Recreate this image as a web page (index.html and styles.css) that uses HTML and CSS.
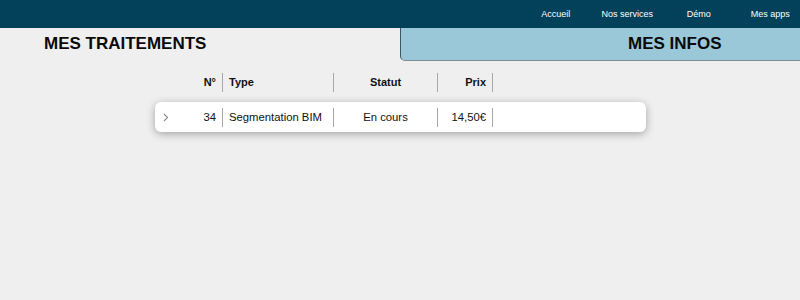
FILE: index.html
```html
<!DOCTYPE html>
<html lang="fr">
<head>
<meta charset="utf-8">
<link rel="stylesheet" href="styles.css">
</head>
<body>
<header class="topbar">
  <nav class="nav">
    <a class="nav-link">Accueil</a>
    <a class="nav-link">Nos services</a>
    <a class="nav-link">Démo</a>
    <a class="nav-link">Mes apps</a>
  </nav>
</header>
<div class="tabs">
  <div class="tab tab-left">MES TRAITEMENTS</div>
  <div class="tab tab-right">MES INFOS</div>
</div>
<main class="content">
  <div class="table">
    <div class="row head">
      <div class="cell c-chev"></div>
      <div class="cell c-num sep">N°</div>
      <div class="cell c-type sep">Type</div>
      <div class="cell c-stat sep">Statut</div>
      <div class="cell c-prix sep">Prix</div>
      <div class="cell c-rest"></div>
    </div>
    <div class="row card">
      <div class="cell c-chev"><svg width="6" height="9" viewBox="0 0 6 9"><polyline points="1,1 4.5,4.5 1,8" fill="none" stroke="#8a8a8a" stroke-width="1.1"/></svg></div>
      <div class="cell c-num sep">34</div>
      <div class="cell c-type sep">Segmentation BIM</div>
      <div class="cell c-stat sep">En cours</div>
      <div class="cell c-prix sep">14,50€</div>
      <div class="cell c-rest"></div>
    </div>
  </div>
</main>
</body>
</html>
```
FILE: styles.css
```css
html, body {
  margin: 0;
  padding: 0;
}
body {
  width: 800px;
  height: 300px;
  overflow: hidden;
  background: #efefef;
  font-family: "Liberation Sans", Arial, sans-serif;
  color: #111;
}
.topbar {
  height: 28px;
  background: #03405a;
}
.nav {
  display: flex;
  padding-left: 520px;
}
.nav-link {
  flex: 0 0 71.5px;
  text-align: center;
  color: #fff;
  font-size: 9px;
  line-height: 28px;
}
.tabs {
  display: grid;
  grid-template-columns: 400px 400px;
  height: 33px;
}
.tab {
  font-size: 17px;
  font-weight: bold;
  line-height: 32px;
  color: #0a0a0a;
}
.tab-left {
  padding-left: 44px;
}
.tab-right {
  background: #9ac8d8;
  border-left: 1px solid #3f5560;
  border-bottom: 1px solid #7d8e95;
  border-bottom-left-radius: 5px;
  padding-left: 227px;
}
.content {
  padding: 11px 0 0 155px;
}
.table {
  width: 491px;
}
.row {
  display: grid;
  grid-template-columns: 28px 40px 111px 104px 55px 1fr;
  align-items: center;
}
.head {
  height: 20px;
  font-size: 11px;
  font-weight: bold;
}
.card {
  margin-top: 10px;
  height: 30px;
  background: #fff;
  border-radius: 6px;
  box-shadow: 0 2px 8px rgba(0, 0, 0, 0.32);
  font-size: 11.3px;
}
.cell {
  height: 19px;
  line-height: 19px;
  white-space: nowrap;
}
.sep {
  border-right: 1px solid #a8a8a8;
}
.c-chev {
  display: flex;
  align-items: center;
  padding-left: 8px;
}
.c-num {
  text-align: right;
  padding-right: 6px;
}
.c-type {
  padding-left: 6px;
}
.c-stat {
  text-align: center;
}
.c-prix {
  text-align: right;
  padding-right: 6px;
}
```
